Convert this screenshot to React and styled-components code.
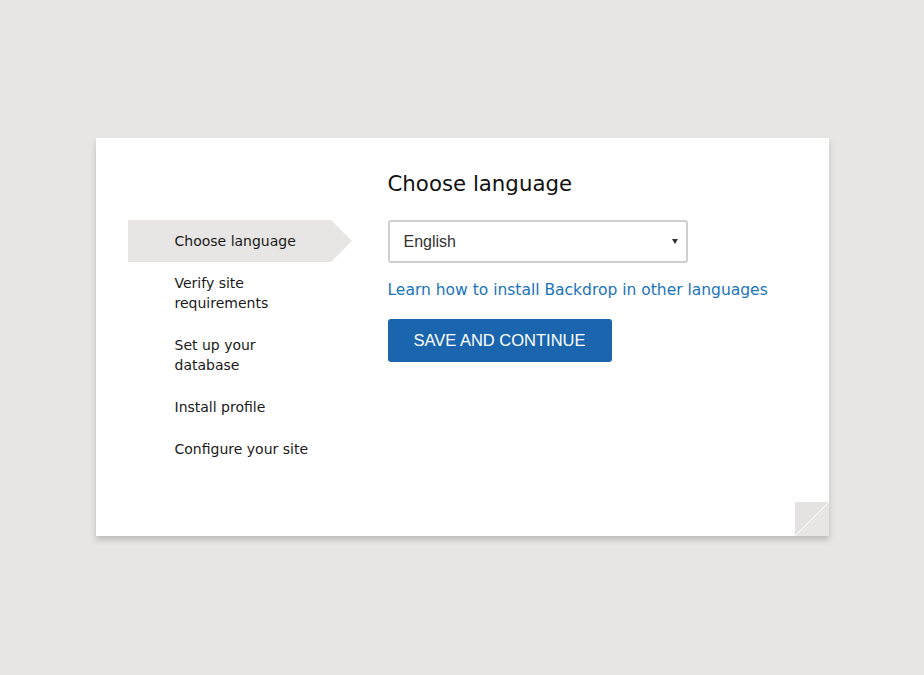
import React from "react";
import styled, { createGlobalStyle } from "styled-components";

const GlobalStyle = createGlobalStyle`
  html, body {
    margin: 0;
    padding: 0;
    background: #e7e6e4;
  }
  body {
    font-family: "DejaVu Sans", sans-serif;
    color: #1e1e1e;
  }
`;

const Page = styled.div`
  min-height: 100vh;
  box-sizing: border-box;
  padding-bottom: 1px;
  display: flex;
  align-items: center;
  justify-content: center;
`;

const Card = styled.div`
  position: relative;
  width: 733px;
  height: 398px;
  box-sizing: border-box;
  background: #ffffff;
  box-shadow: 0 4px 6px rgba(0, 0, 0, 0.18);
  display: grid;
  grid-template-columns: 224px 1fr;
  column-gap: 36px;
  padding: 32px 0 0 32px;
`;

const Fold = styled.div`
  position: absolute;
  right: 0;
  bottom: 0;
  width: 34px;
  height: 34px;
  background: linear-gradient(
    to bottom right,
    #e4e3e1 0%,
    #e4e3e1 49%,
    #ffffff 49.5%,
    #ffffff 51%,
    #e7e6e4 51.5%
  );
`;

const Steps = styled.ol`
  list-style: none;
  margin: 0;
  padding: 50px 0 0 0;
`;

const Step = styled.li`
  position: relative;
  width: 203px;
  box-sizing: border-box;
  padding: 11px 16px 11px 47px;
  font-size: 14px;
  line-height: 20px;
  color: #1a1a1a;
  background: ${(p) => (p.$active ? "#e7e6e4" : "transparent")};

  &::after {
    content: "";
    display: ${(p) => (p.$active ? "block" : "none")};
    position: absolute;
    top: 0;
    left: 100%;
    border-top: 21px solid transparent;
    border-bottom: 21px solid transparent;
    border-left: 21px solid #e7e6e4;
  }
`;

const Main = styled.div`
  display: flex;
  flex-direction: column;
  align-items: flex-start;
`;

const Title = styled.h1`
  margin: 0 0 22px;
  font-size: 21.3px;
  line-height: 28px;
  font-weight: normal;
  color: #111;
`;

const SelectBox = styled.div`
  position: relative;
  width: 300px;
  height: 43px;
  box-sizing: border-box;
  border: 2px solid #cfcfcf;
  border-radius: 3px;
  display: flex;
  align-items: center;
  padding: 0 14px;
  font-family: "Liberation Sans", Arial, sans-serif;
  font-size: 16px;
  color: #333;
`;

const Caret = styled.span`
  margin-left: auto;
  width: 0;
  height: 0;
  border-left: 3px solid transparent;
  border-right: 3px solid transparent;
  border-top: 5px solid #333;
  margin-right: -6px;
`;

const Link = styled.a`
  margin-top: 17px;
  font-size: 15.5px;
  line-height: 20px;
  color: #1a74bb;
  text-decoration: none;
`;

const Button = styled.button`
  margin-top: 19px;
  height: 43px;
  width: 224px;
  border: none;
  border-radius: 3px;
  background: #1a65ae;
  color: #ffffff;
  font-family: "Liberation Sans", Arial, sans-serif;
  font-size: 16.5px;
  padding: 0;
  cursor: pointer;
`;

const steps = [
  "Choose language",
  "Verify site requirements",
  "Set up your database",
  "Install profile",
  "Configure your site",
];

export default function App() {
  return (
    <>
      <GlobalStyle />
      <Page>
        <Card>
          <Steps>
            {steps.map((s, i) => (
              <Step key={s} $active={i === 0}>
                {s}
              </Step>
            ))}
          </Steps>
          <Main>
            <Title>Choose language</Title>
            <SelectBox>
              English
              <Caret />
            </SelectBox>
            <Link href="#">Learn how to install Backdrop in other languages</Link>
            <Button>SAVE AND CONTINUE</Button>
          </Main>
          <Fold />
        </Card>
      </Page>
    </>
  );
}
